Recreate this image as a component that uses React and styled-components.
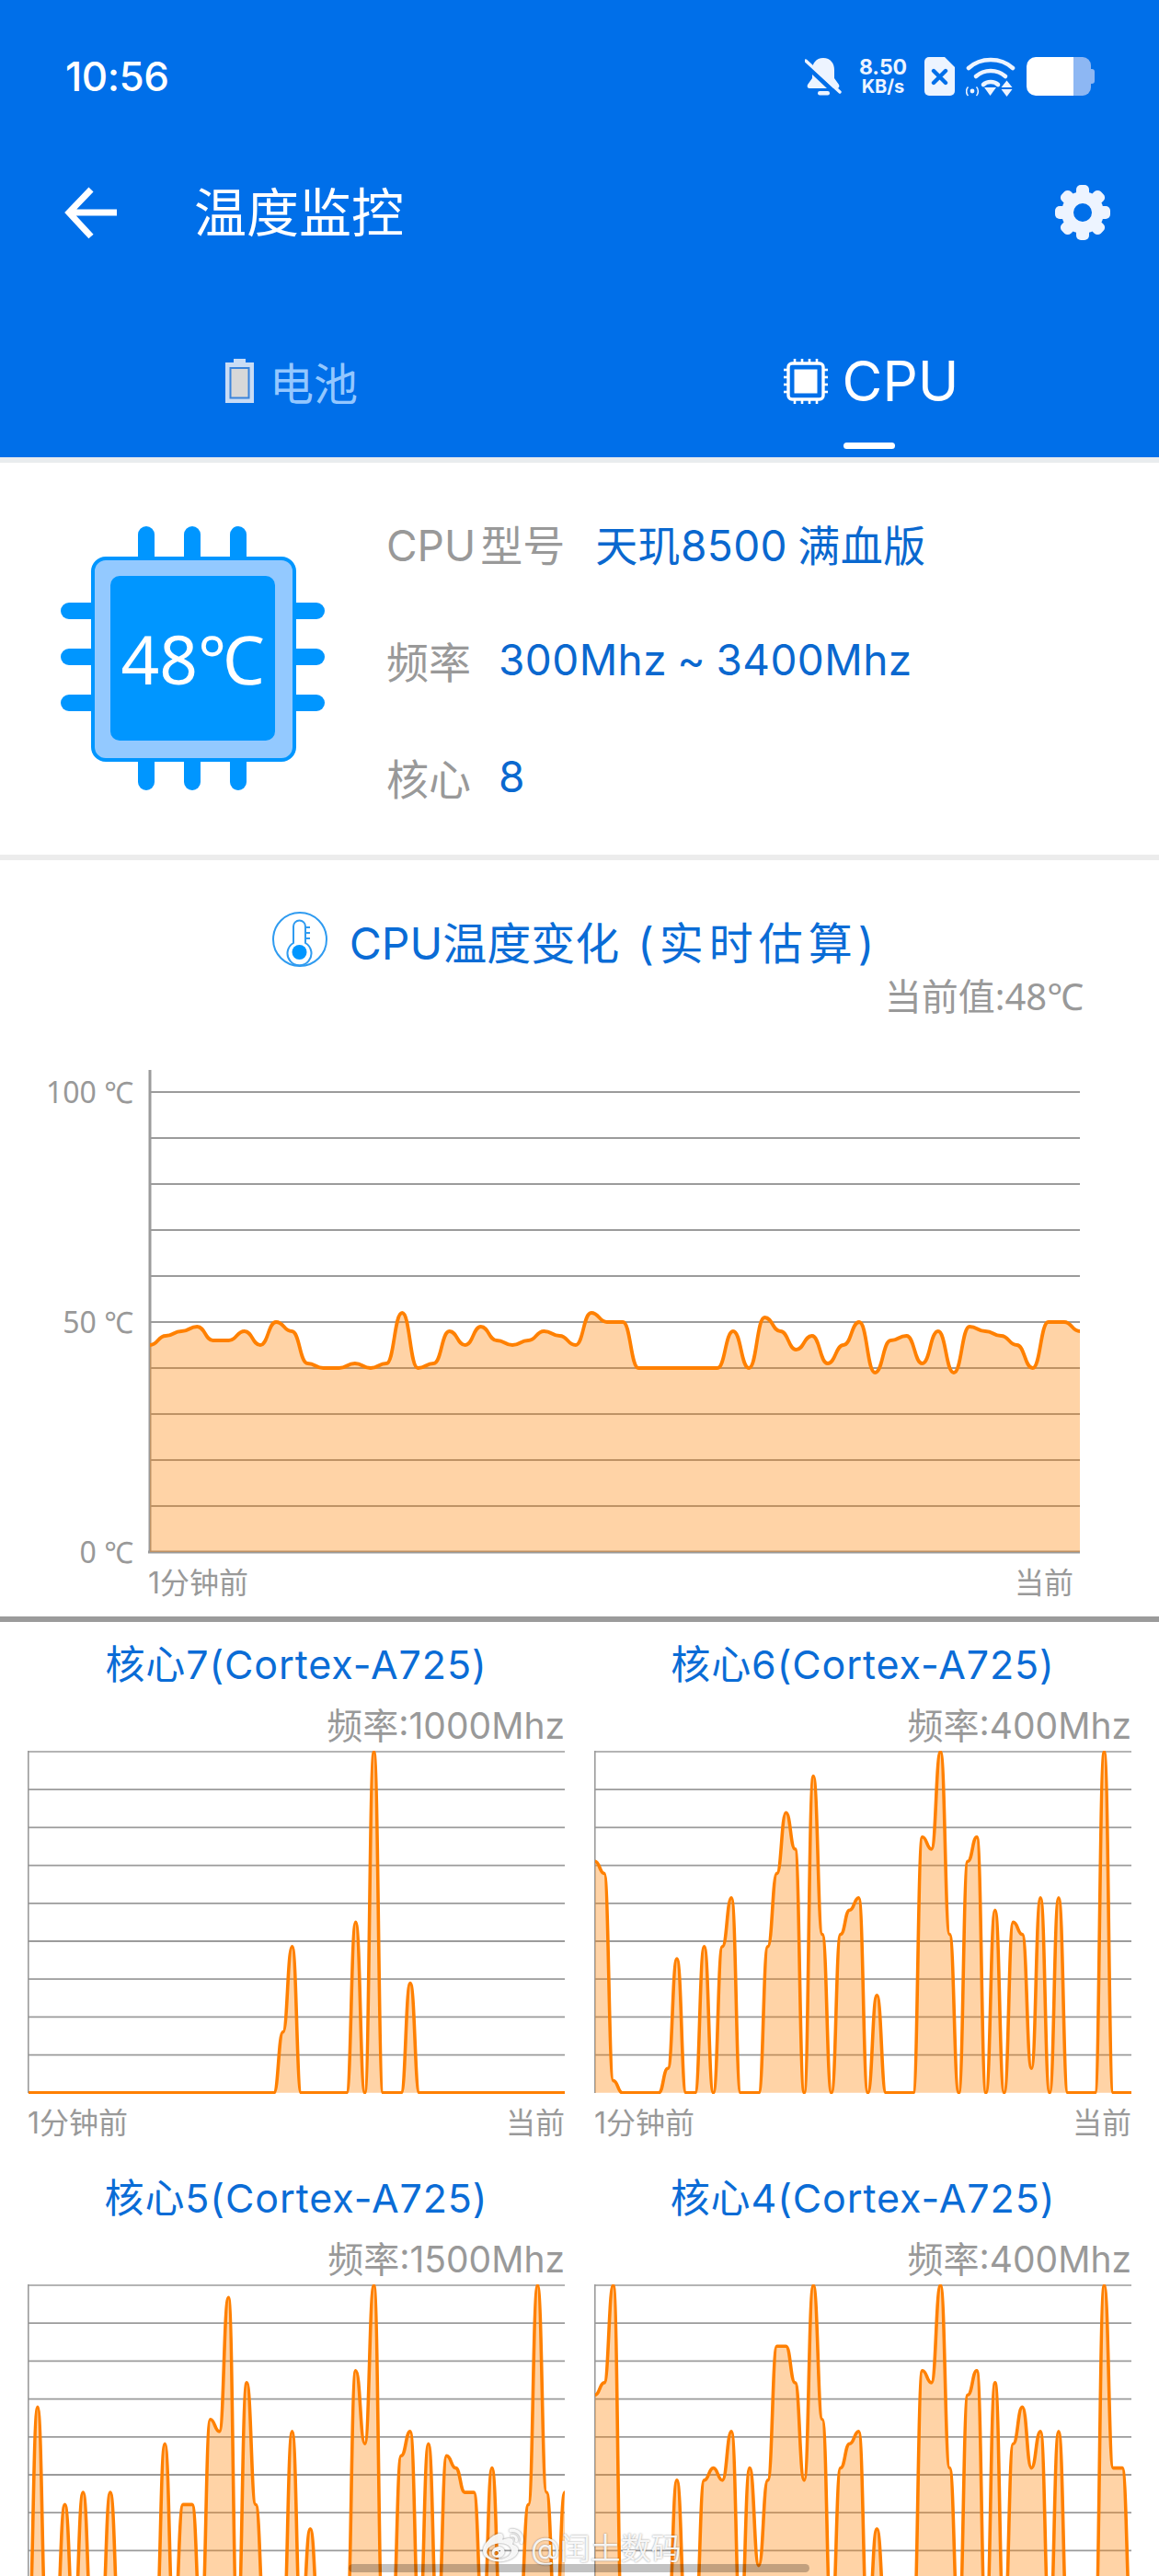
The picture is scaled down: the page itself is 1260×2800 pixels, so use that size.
import React from 'react';
import styled, { createGlobalStyle } from 'styled-components';
import { FaWeibo } from 'react-icons/fa';

const GlobalStyle = createGlobalStyle`
  html, body {
    margin: 0;
    padding: 0;
    background: #fff;
  }
  body {
    font-family: Inter, "Noto Sans CJK SC", sans-serif;
  }
`;

const narrowFont = '"Noto Sans", "Noto Sans CJK SC", sans-serif';

const Page = styled.div`
  position: relative;
  width: 1260px;
  height: 2800px;
  overflow: hidden;
  background: #fff;
`;

const Header = styled.header`
  display: flex;
  flex-direction: column;
  height: 497px;
  background: #006fe9;
  color: #fff;
`;

const StatusBar = styled.div`
  display: flex;
  align-items: center;
  justify-content: space-between;
  height: 42px;
  margin-top: 62px;
  padding: 0 70px 0 71px;
`;

const Time = styled.div`
  font-size: 44px;
  font-weight: 500;
  letter-spacing: -0.5px;
  line-height: 42px;
`;

const StatusIcons = styled.div`
  display: flex;
  align-items: center;
`;

const Speed = styled.div`
  display: flex;
  flex-direction: column;
  align-items: center;
  width: 56px;
  margin: 0 17px 0 17px;
  font-weight: 700;
  color: #edf4ff;
  span:first-child {
    font-size: 23px;
    line-height: 22px;
  }
  span:last-child {
    font-size: 20px;
    line-height: 20px;
  }
`;

const StatusSvg = styled.svg`
  display: block;
  flex: none;
  margin-left: ${({ $gap }) => $gap || 0}px;
`;

const Toolbar = styled.div`
  display: flex;
  align-items: center;
  height: 60px;
  margin-top: 97px;
  padding: 0 53px 0 70px;
`;

const PageTitle = styled.h1`
  flex: 1;
  margin: 0 0 0 81px;
  padding-top: 2px;
  font-size: 57px;
  font-weight: 400;
  line-height: 60px;
`;

const Tabs = styled.div`
  display: grid;
  grid-template-columns: 1fr 1fr;
  margin-top: 127px;
`;

const Tab = styled.div`
  display: flex;
  flex-direction: column;
  align-items: center;
`;

const TabLabel = styled.div`
  display: flex;
  align-items: center;
  gap: ${({ $active }) => ($active ? 16 : 17)}px;
  height: 50px;
  padding: 2px 0 0 4px;
  box-sizing: border-box;
  font-size: ${({ $active }) => ($active ? 60 : 48)}px;
  color: ${({ $active }) => ($active ? '#fff' : '#93c7ff')};
`;

const Indicator = styled.div`
  width: 56px;
  height: 7px;
  margin-top: 43px;
  border-radius: 4px;
  background: ${({ $active }) => ($active ? '#fff' : 'transparent')};
`;

const Divider = styled.div`
  height: ${({ $size }) => $size}px;
  background: ${({ $color }) => $color};
`;

const InfoSection = styled.section`
  display: flex;
  align-items: flex-start;
  height: 426px;
  padding-left: 66px;
`;

const Chip = styled.div`
  position: relative;
  flex: none;
  width: 287px;
  height: 287px;
  margin-top: 69px;
`;

const ChipTemp = styled.div`
  position: absolute;
  inset: 0;
  display: flex;
  align-items: center;
  justify-content: center;
  font-family: ${narrowFont};
  font-size: 73px;
  color: #fff;
`;

const InfoList = styled.div`
  margin: 23px 0 0 67px;
`;

const InfoRow = styled.div`
  display: flex;
  align-items: center;
  gap: ${({ $gap }) => $gap}px;
  height: 127px;
  font-size: 46px;
`;

const InfoLabel = styled.span`
  word-spacing: -8px;
  color: #999;
`;

const InfoValue = styled.span`
  letter-spacing: 0.4px;
  word-spacing: -2px;
  color: #0a68cf;
`;

const TempSection = styled.section`
  padding: 56px 86px 16px 0;
`;

const TempTitle = styled.h2`
  display: flex;
  align-items: center;
  justify-content: center;
  gap: 23px;
  height: 61px;
  margin: 0 -86px 0 0;
  padding-right: 8px;
  font-size: 48px;
  font-weight: 400;
  color: #0a6cd6;
`;

const TitleNote = styled.span`
  margin-left: 20px;
  letter-spacing: 6px;
`;

const CurrentValue = styled.div`
  height: 50px;
  margin: 6px -4px 0 0;
  font-family: ${narrowFont};
  font-size: 40px;
  line-height: 50px;
  text-align: right;
  color: #999;
`;

const ChartRow = styled.div`
  display: flex;
  align-items: flex-start;
  height: 528px;
  margin-top: 54px;
`;

const YAxis = styled.div`
  display: flex;
  flex: none;
  flex-direction: column;
  justify-content: space-between;
  width: 145px;
  height: 540px;
  margin: 5px 16px 0 0;
  font-family: ${narrowFont};
  font-size: 32px;
  line-height: 40px;
  text-align: right;
  color: #999;
`;

const ChartSvg = styled.svg`
  display: block;
  flex: none;
`;

const XAxis = styled.div`
  display: flex;
  justify-content: space-between;
  height: 40px;
  margin: ${({ $top }) => $top}px ${({ $right }) => $right || 0}px 0 ${({ $left }) => $left || 0}px;
  font-size: 32px;
  line-height: 40px;
  color: #999;
`;

const CoreGrid = styled.section`
  display: grid;
  grid-template-columns: 584px 584px;
  column-gap: 32px;
  row-gap: 15px;
  padding: 0 30px;
`;

const CoreCell = styled.div`
  padding-top: 16px;
`;

const CoreTitle = styled.div`
  height: 60px;
  font-size: 43px;
  letter-spacing: 0.9px;
  line-height: 60px;
  text-align: center;
  color: #0a6cd6;
`;

const CoreFreq = styled.div`
  height: 50px;
  margin: 12px 0 2px;
  font-size: 39px;
  line-height: 50px;
  text-align: right;
  color: #999;
`;

const Watermark = styled.div`
  position: absolute;
  left: 525px;
  top: 2748px;
  display: flex;
  align-items: center;
  gap: 8px;
  height: 40px;
  font-size: 33px;
  color: rgba(255, 255, 255, 0.92);
  text-shadow: 0 0 2px rgba(0, 0, 0, 0.45);
  svg {
    filter: drop-shadow(0 0 1px rgba(0, 0, 0, 0.5));
  }
`;

const GestureBar = styled.div`
  position: absolute;
  left: 379px;
  top: 2787px;
  width: 501px;
  height: 9px;
  border-radius: 5px;
  background: rgba(0, 0, 0, 0.24);
`;

const tempData = [
  45, 47, 48, 49, 46, 46, 48, 45, 50, 48, 41, 40, 40, 41, 40, 41, 52, 40, 41, 48,
  45, 49, 46, 45, 46, 48, 47, 45, 52, 50, 50, 40, 40, 40, 40, 40, 40, 48, 40, 51,
  48, 44, 47, 41, 45, 50, 39, 46, 47, 41, 48, 39, 49, 48, 47, 45, 40, 50, 50, 48,
];

const core7 = Array.from({ length: 60 }, (_, i) => ({ 28: 5, 29: 12, 36: 14, 38: 28, 42: 9 }[i] || 0));

const cores = [
  { name: '核心7(Cortex-A725)', freq: '频率:1000Mhz', data: core7 },
  {
    name: '核心6(Cortex-A725)',
    freq: '频率:400Mhz',
    data: [
      19, 18, 1, 0, 0, 0, 0, 0, 2, 11, 0, 0, 12, 0, 12, 16, 0, 0, 0, 12,
      18, 23, 20, 0, 26, 13, 0, 13, 15, 16, 0, 8, 0, 0, 0, 0, 21, 20, 28, 13,
      0, 19, 21, 0, 15, 0, 14, 13, 2, 16, 0, 16, 0, 0, 0, 0, 28, 0, 0, 0,
    ],
  },
  {
    name: '核心5(Cortex-A725)',
    freq: '频率:1500Mhz',
    data: [
      0, 18, 0, 0, 10, 0, 11, 0, 0, 11, 0, 0, 0, 0, 0, 15, 0, 10, 10, 0,
      17, 16, 27, 0, 20, 10, 0, 0, 0, 16, 0, 8, 0, 0, 0, 0, 21, 15, 28, 0,
      0, 14, 16, 0, 15, 0, 14, 13, 11, 11, 0, 13, 0, 0, 0, 10, 28, 11, 0, 11,
    ],
  },
  {
    name: '核心4(Cortex-A725)',
    freq: '频率:400Mhz',
    data: [
      19, 20, 28, 0, 0, 0, 0, 0, 0, 12, 0, 0, 12, 13, 12, 16, 0, 13, 5, 12,
      23, 23, 20, 12, 28, 17, 0, 13, 15, 16, 0, 8, 0, 0, 0, 0, 21, 20, 28, 13,
      0, 19, 21, 0, 20, 0, 15, 18, 13, 16, 0, 16, 0, 0, 0, 0, 28, 13, 13, 0,
    ],
  },
];

// horizontal bezier: flat tangent on every sample, so no overshoot
function smoothPath(pts) {
  let d = `M${pts[0][0]} ${pts[0][1]}`;
  for (let i = 1; i < pts.length; i += 1) {
    const [x1, y1] = pts[i - 1];
    const [x2, y2] = pts[i];
    const mid = ((x1 + x2) / 2).toFixed(1);
    d += `C${mid} ${y1.toFixed(1)} ${mid} ${y2.toFixed(1)} ${x2.toFixed(1)} ${y2.toFixed(1)}`;
  }
  return d;
}

function Area({ data, x0, x1, yTop, yBottom, max, stroke }) {
  const step = (x1 - x0) / (data.length - 1);
  const pts = data.map((v, i) => [x0 + i * step, yBottom - (v / max) * (yBottom - yTop)]);
  const line = smoothPath(pts);
  return (
    <>
      <path d={`${line}L${x1} ${yBottom}L${x0} ${yBottom}Z`} fill="#ff8000" fillOpacity="0.35" />
      <path d={line} fill="none" stroke="#ff8000" strokeWidth={stroke} strokeLinejoin="round" />
    </>
  );
}

function TempChart() {
  const lines = Array.from({ length: 10 }, (_, i) => 25 + i * 50);
  return (
    <ChartSvg width="1013" height="528" viewBox="0 0 1013 528">
      {lines.map((y) => (
        <line key={y} x1="2" x2="1013" y1={y} y2={y} stroke="#9b9b9b" strokeWidth="1.8" />
      ))}
      <line x1="2" x2="2" y1="1" y2="526" stroke="#9b9b9b" strokeWidth="3" />
      <line x1="0" x2="1013" y1="525" y2="525" stroke="#9b9b9b" strokeWidth="3" />
      <Area data={tempData} x0={2} x1={1013} yTop={25} yBottom={525} max={100} stroke={3.8} />
    </ChartSvg>
  );
}

function CoreChart({ data }) {
  const lines = Array.from({ length: 9 }, (_, i) => 1 + i * 41.2);
  return (
    <ChartSvg width="584" height="373" viewBox="0 0 584 373">
      {lines.map((y) => (
        <line key={y} x1="0" x2="584" y1={y} y2={y} stroke="#9b9b9b" strokeWidth={y === 1 ? 1.4 : 1.8} />
      ))}
      <line x1="0.8" x2="0.8" y1="0" y2="372" stroke="#9b9b9b" strokeWidth="1.6" />
      <Area data={data} x0={1} x1={584} yTop={1} yBottom={371.8} max={28} stroke={3.6} />
    </ChartSvg>
  );
}

function BellOff() {
  return (
    <StatusSvg width="40" height="42" viewBox="0 0 40 42">
      <path d="M20 1C12 1 8 7 8 14v9l-5 7c-1 2 0 4 2 4h30c2 0 3-2 2-4l-5-7v-9C32 7 28 1 20 1Z" fill="#edf4ff" />
      <rect x="14" y="37" width="13" height="4.5" rx="2.2" fill="#edf4ff" />
      <path d="M-1 7 35 41" stroke="#006fe9" strokeWidth="5" />
      <path d="M1 4 38 38" stroke="#edf4ff" strokeWidth="3.4" strokeLinecap="round" />
    </StatusSvg>
  );
}

function SimOff() {
  return (
    <StatusSvg width="33" height="42" viewBox="0 0 33 42">
      <path d="M5 0H22L33 11V37a5 5 0 0 1-5 5H5a5 5 0 0 1-5-5V5a5 5 0 0 1 5-5Z" fill="#edf4ff" />
      <path d="M10 15 23 28M23 15 10 28" stroke="#006fe9" strokeWidth="4.4" strokeLinecap="round" />
    </StatusSvg>
  );
}

function Wifi() {
  return (
    <StatusSvg width="54" height="43" viewBox="0 0 54 43" $gap={12}>
      <g fill="none" stroke="#edf4ff" strokeWidth="4.6" strokeLinecap="round">
        <path d="M3 12C16 0 38 0 51 12" />
        <path d="M11 21C20 13 34 13 43 21" />
        <path d="M19 30C23 26 31 26 35 30" />
      </g>
      <path d="M20 33h13l-6.500 9Z" fill="#edf4ff" />
      <path d="M44.500 25.500 50.500 33H38.500ZM38.500 35H50.500L44.500 43Z" fill="#edf4ff" />
      <circle cx="7" cy="37" r="2.400" fill="#edf4ff" />
      <path d="M2.500 32.500c-2.500 2.500-2.500 7 0 9.500M11.500 32.500c2.500 2.500 2.500 7 0 9.500" fill="none" stroke="#edf4ff" strokeWidth="1.6" />
    </StatusSvg>
  );
}

function Battery() {
  return (
    <StatusSvg width="74" height="42" viewBox="0 0 74 42" $gap={12}>
      <path d="M10 0H51V42H10A10 10 0 0 1 0 32V10A10 10 0 0 1 10 0Z" fill="#fff" />
      <path d="M51 0H61A9 9 0 0 1 70 9V33A9 9 0 0 1 61 42H51Z" fill="#8db7f3" />
      <path d="M70 13h1a3 3 0 0 1 3 3v10a3 3 0 0 1-3 3h-1Z" fill="#8db7f3" />
    </StatusSvg>
  );
}

function BackArrow() {
  return (
    <svg width="60" height="60" viewBox="0 0 60 60">
      <path d="M57 30H6M29 5 5 30 29 56" fill="none" stroke="#fff" strokeWidth="7" />
    </svg>
  );
}

function Gear() {
  const angles = [0, 45, 90, 135, 180, 225, 270, 315];
  return (
    <svg width="60" height="60" viewBox="0 0 60 60">
      {angles.map((a) => (
        <rect key={a} x="23" y="0" width="14" height="16" rx="5" fill="#edf4ff" transform={`rotate(${a} 30 30)`} />
      ))}
      <circle cx="30" cy="30" r="16.500" fill="none" stroke="#edf4ff" strokeWidth="13" />
    </svg>
  );
}

function TabBattery() {
  return (
    <svg width="31" height="48" viewBox="0 0 31 48">
      <path d="M9 0h13v4h9v44H0V4h9Z" fill="#c9dcf5" />
      <rect x="4.500" y="9" width="22" height="34.500" fill="#3a84dc" />
      <rect x="6.500" y="11" width="18" height="30.500" fill="#d8d8d8" />
    </svg>
  );
}

function TabCpu() {
  const pins = [12, 20, 28, 36];
  return (
    <svg width="48" height="49" viewBox="0 0 48 49">
      {pins.map((p) => (
        <g key={p} stroke="#fff" strokeWidth="2.600">
          <line x1={p} x2={p} y1="0" y2="6" />
          <line x1={p} x2={p} y1="43" y2="49" />
          <line y1={p} y2={p} x1="0" x2="6" />
          <line y1={p} y2={p} x1="42" x2="48" />
        </g>
      ))}
      <rect x="5" y="5" width="38" height="39" rx="4" fill="none" stroke="#fff" strokeWidth="3.400" />
      <rect x="11.500" y="11.500" width="25" height="26" fill="#fff" />
    </svg>
  );
}

function ChipDrawing() {
  const at = [93, 143, 193];
  return (
    <svg width="287" height="287" viewBox="0 0 287 287">
      {at.map((p) => (
        <g key={p} stroke="#0096ff" strokeWidth="18" strokeLinecap="round">
          <line x1={p} x2={p} y1="9" y2="60" />
          <line x1={p} x2={p} y1="230" y2="278" />
          <line y1={p - 1} y2={p - 1} x1="9" x2="60" />
          <line y1={p - 1} y2={p - 1} x1="230" x2="278" />
        </g>
      ))}
      <rect x="35" y="35" width="219" height="219" rx="14" fill="#93c9ff" stroke="#0096ff" strokeWidth="4" />
      <rect x="54" y="54" width="179" height="179" rx="10" fill="#0096ff" />
    </svg>
  );
}

function Thermo() {
  return (
    <svg width="61" height="61" viewBox="0 0 61 61">
      <circle cx="30" cy="30" r="29" fill="none" stroke="#2f9bf0" strokeWidth="2" />
      <path d="M23 16a6.500 6.500 0 0 1 13 0v18a13 13 0 1 1-13 0Z" fill="none" stroke="#2f9bf0" strokeWidth="2" />
      <path d="M36 17h5M36 23h5M36 29h5" stroke="#2f9bf0" strokeWidth="2" />
      <circle cx="29.500" cy="44" r="8" fill="#0096ff" />
    </svg>
  );
}

export default function App() {
  return (
    <Page>
      <GlobalStyle />
      <Header>
        <StatusBar>
          <Time>10:56</Time>
          <StatusIcons>
            <BellOff />
            <Speed>
              <span>8.50</span>
              <span>KB/s</span>
            </Speed>
            <SimOff />
            <Wifi />
            <Battery />
          </StatusIcons>
        </StatusBar>
        <Toolbar>
          <BackArrow />
          <PageTitle>温度监控</PageTitle>
          <Gear />
        </Toolbar>
        <Tabs>
          <Tab>
            <TabLabel>
              <TabBattery />
              电池
            </TabLabel>
            <Indicator />
          </Tab>
          <Tab>
            <TabLabel $active>
              <TabCpu />
              CPU
            </TabLabel>
            <Indicator $active />
          </Tab>
        </Tabs>
      </Header>
      <Divider $size={6} $color="#e9ecee" />

      <InfoSection>
        <Chip>
          <ChipDrawing />
          <ChipTemp>48℃</ChipTemp>
        </Chip>
        <InfoList>
          <InfoRow $gap={33}>
            <InfoLabel>CPU 型号</InfoLabel>
            <InfoValue>天玑8500 满血版</InfoValue>
          </InfoRow>
          <InfoRow $gap={30}>
            <InfoLabel>频率</InfoLabel>
            <InfoValue>300Mhz ~ 3400Mhz</InfoValue>
          </InfoRow>
          <InfoRow $gap={30}>
            <InfoLabel>核心</InfoLabel>
            <InfoValue>8</InfoValue>
          </InfoRow>
        </InfoList>
      </InfoSection>
      <Divider $size={6} $color="#ececec" />

      <TempSection>
        <TempTitle>
          <Thermo />
          <span>
            CPU温度变化
            <TitleNote>(实时估算)</TitleNote>
          </span>
        </TempTitle>
        <CurrentValue>当前值:48℃</CurrentValue>
        <ChartRow>
          <YAxis>
            <span>100 ℃</span>
            <span>50 ℃</span>
            <span>0 ℃</span>
          </YAxis>
          <TempChart />
        </ChartRow>
        <XAxis $top={11} $left={161} $right={7}>
          <span>1分钟前</span>
          <span>当前</span>
        </XAxis>
      </TempSection>
      <Divider $size={6} $color="#9b9b9b" />

      <CoreGrid>
        {cores.map((c, i) => (
          <CoreCell key={c.name}>
            <CoreTitle>{c.name}</CoreTitle>
            <CoreFreq>{c.freq}</CoreFreq>
            <CoreChart data={c.data} />
            {i < 2 && (
              <XAxis $top={12}>
                <span>1分钟前</span>
                <span>当前</span>
              </XAxis>
            )}
          </CoreCell>
        ))}
      </CoreGrid>

      <Watermark>
        <FaWeibo size={44} />
        <span>@闰土数码</span>
      </Watermark>
      <GestureBar />
    </Page>
  );
}
